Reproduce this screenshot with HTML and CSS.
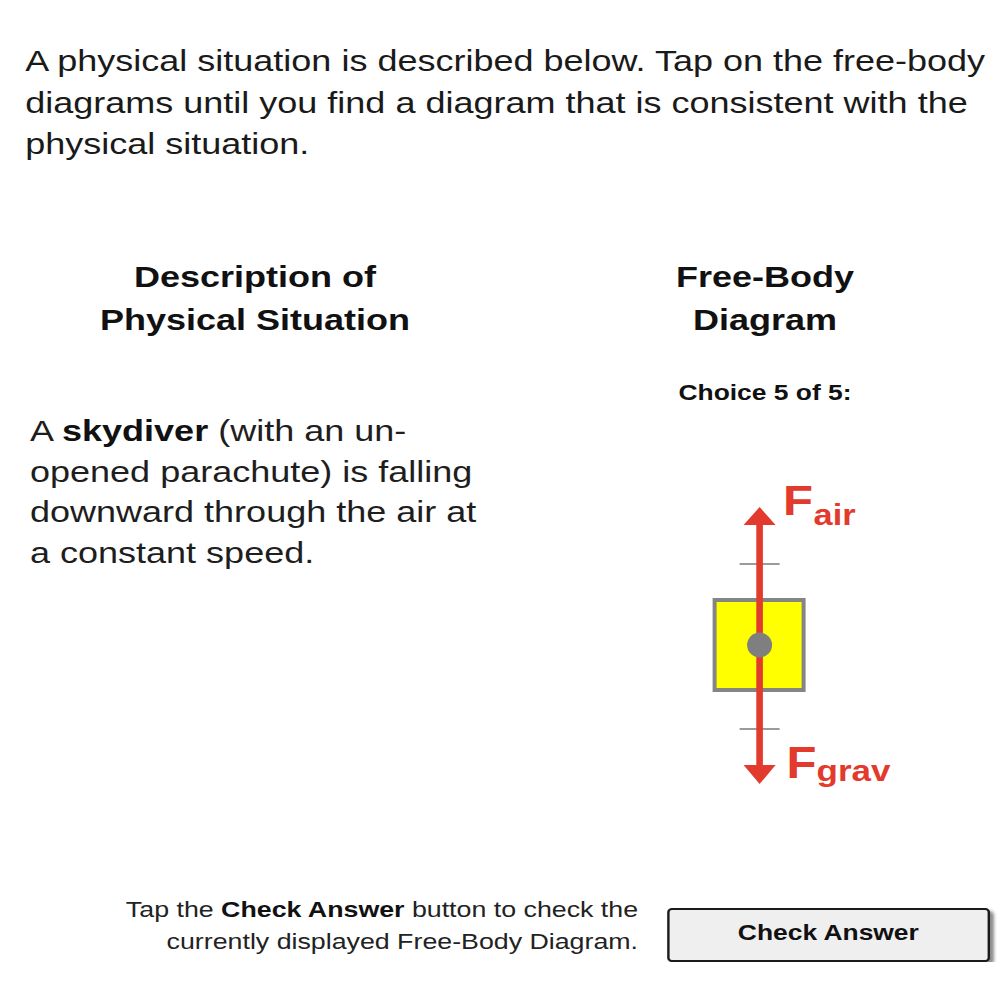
FILE: index.html
```html
<!DOCTYPE html>
<html lang="en">
<head>
<meta charset="utf-8">
<title>Free-Body Diagram</title>
<link rel="stylesheet" href="styles.css">
</head>
<body>
<div class="page">
  <p class="intro">A physical situation is described below. Tap on the free-body diagrams until you find a diagram that is consistent with the physical situation.</p>

  <div class="columns">
    <div class="col col-left">
      <h2 class="heading">Description of<br>Physical Situation</h2>
      <p class="desc">A <b>skydiver</b> (with an un-opened parachute) is falling downward through the air at a constant speed.</p>
    </div>
    <div class="col col-right">
      <h2 class="heading">Free-Body<br>Diagram</h2>
      <p class="choice">Choice 5 of 5:</p>
      <svg class="fbd" viewBox="700 470 200 330" preserveAspectRatio="none" aria-label="Free-body diagram">
        <line x1="740" y1="564" x2="780" y2="564" class="tick"/>
        <line x1="740" y1="729" x2="780" y2="729" class="tick"/>
        <rect x="715" y="600" width="89" height="90" class="box"/>
        <rect x="756.7" y="522" width="6.6" height="246" class="force"/>
        <polygon points="760,507 776,525 744,525" class="force"/>
        <polygon points="760,784 776,765 744,765" class="force"/>
        <circle cx="760" cy="645" r="12.5" class="dot"/>
        <text x="783.5" y="515.5" class="lbl-main" textLength="30" lengthAdjust="spacingAndGlyphs">F</text>
        <text x="814" y="525" class="lbl-sub" textLength="42" lengthAdjust="spacingAndGlyphs">air</text>
        <text x="787" y="778.5" class="lbl-main lbl-big" textLength="30" lengthAdjust="spacingAndGlyphs">F</text>
        <text x="817" y="781.5" class="lbl-sub" textLength="74" lengthAdjust="spacingAndGlyphs">grav</text>
      </svg>
    </div>
  </div>

  <div class="footer">
    <p class="hint">Tap the <b>Check Answer</b> button to check the<br>currently displayed Free-Body Diagram.</p>
    <button class="check" type="button">Check Answer</button>
  </div>
</div>
</body>
</html>
```

FILE: styles.css
```css
html, body {
  margin: 0;
  padding: 0;
  background: #ffffff;
  overflow: hidden;
}

body {
  font-family: "Liberation Sans", Arial, sans-serif;
  color: #1e1e1e;
}

.page {
  width: 833.33px;
  transform: scaleX(1.2);
  transform-origin: 0 0;
  padding-top: 40px;
}

.intro {
  margin: 0;
  padding: 0 21px;
  font-size: 30px;
  line-height: 41.5px;
  width: 800px;
  color: #1a1a1a;
}

.columns {
  display: grid;
  grid-template-columns: 425px 375px;
  column-gap: 25px;
  margin-top: 90.5px;
  align-items: start;
}

.heading {
  margin: 0;
  text-align: center;
  font-size: 30px;
  font-weight: bold;
  line-height: 43px;
  color: #111;
}

.desc {
  margin: 70px 0 0 0;
  padding-left: 25px;
  width: 380px;
  font-size: 30px;
  line-height: 40.5px;
  color: #1e1e1e;
}

.desc b {
  color: #111;
}

.choice {
  margin: 38.5px 0 0 0;
  text-align: center;
  font-size: 22px;
  font-weight: bold;
  line-height: 26px;
  color: #111;
}

.fbd {
  display: block;
  width: 166.67px;
  height: 330px;
  margin: 64.5px 0 0 133.33px;
}

.tick {
  stroke: #7a7a7a;
  stroke-width: 1.5;
}

.box {
  fill: #ffff00;
  stroke: #858585;
  stroke-width: 4;
}

.force {
  fill: #e23a2c;
}

.dot {
  fill: #7f7f7f;
}

.lbl-main {
  font-family: "Liberation Sans", Arial, sans-serif;
  font-weight: bold;
  font-size: 43px;
  fill: #e23a2c;
}

.lbl-big {
  font-size: 44px;
}

.lbl-sub {
  font-family: "Liberation Sans", Arial, sans-serif;
  font-weight: bold;
  font-size: 30px;
  fill: #e23a2c;
}

.footer {
  display: flex;
  align-items: flex-start;
  gap: 24px;
  margin-top: 93.5px;
}

.hint {
  margin: 0;
  width: 531.7px;
  text-align: right;
  font-size: 22.3px;
  line-height: 32.7px;
  color: #222;
}

.hint b {
  color: #111;
}

.check {
  margin-top: 14.5px;
  width: 269.2px;
  height: 54px;
  box-sizing: border-box;
  border: 2px solid #1a1a1a;
  border-radius: 4px;
  background: #efefef;
  box-shadow: 2.5px 3px 3px rgba(0, 0, 0, 0.45);
  font-family: "Liberation Sans", Arial, sans-serif;
  font-size: 22px;
  font-weight: bold;
  color: #111;
  padding: 0 0 4px 0;
  cursor: pointer;
}
```
